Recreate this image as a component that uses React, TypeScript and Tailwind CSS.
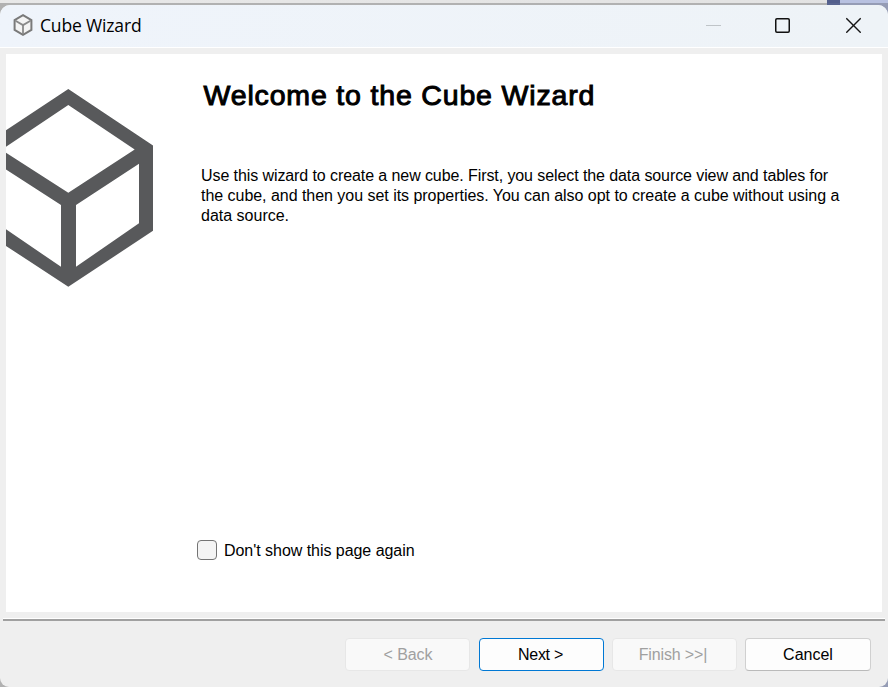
import type { ReactNode } from "react";

function CubeIcon() {
  return (
    <svg width="20" height="22" viewBox="0 0 20 22" fill="none" strokeLinejoin="miter">
      <path d="M10 1.2 L18.4 6.1 V15.9 L10 20.8 L1.6 15.9 V6.1 Z" fill="#f4f4f4" stroke="#7a7a7a" strokeWidth="2" />
      <path d="M2.5 6.8 L10 11.1 L17.5 6.8 M10 11.1 V20" stroke="#8a8a8a" strokeWidth="1.8" />
    </svg>
  );
}

function TitleBar() {
  return (
    <header className="flex h-[43px] shrink-0 items-center border-b border-white bg-gradient-to-r from-[#eff4fb] to-[#eef3f7] pl-[13px]">
      <div className="-mt-[2px] flex">
        <CubeIcon />
      </div>
      <h1 className="-mt-[2px] ml-[7px] flex-1 whitespace-nowrap font-['Open_Sans','Noto_Sans',sans-serif] text-[17.5px] leading-6 tracking-[-0.16px]">
        Cube Wizard
      </h1>
      <div className="-mt-[2px] flex items-center pr-[27px]">
        <svg className="mr-[54px]" width="15" height="16" viewBox="0 0 15 16">
          <path d="M0 8.5H15" stroke="#bfc4c8" />
        </svg>
        <svg className="mr-[56px]" width="15" height="16" viewBox="0 0 15 16" fill="none">
          <rect x="0.75" y="1.75" width="13.5" height="13.5" rx="1.2" stroke="#111" strokeWidth="1.5" />
        </svg>
        <svg width="15" height="16" viewBox="0 0 15 16">
          <path d="M0.3 1.3L14.7 15.7M14.7 1.3L0.3 15.7" stroke="#151515" strokeWidth="1.35" />
        </svg>
      </div>
    </header>
  );
}

function CubeArt() {
  return (
    <svg className="mt-[35px] shrink-0" width="147" height="198" viewBox="6 89 147 198">
      <path
        fill="#58595b"
        fillRule="evenodd"
        d="M68.3 89L153 145.5V230.8L68.3 286.8L-17 230.8V145.5Z M68.3 105L134.7 149.5L68.3 192.7L1.5 149.8Z M76 205L139 163.7V223.2L76 266.8Z M61 205L-3 163.7V223.2L61 266.8Z"
      />
    </svg>
  );
}

function WizardButton({ children, className }: { children: ReactNode; className: string }) {
  return (
    <button className={`h-[33px] rounded-[4px] border text-[16px] whitespace-pre ${className}`}>{children}</button>
  );
}

export default function App() {
  return (
    <div className="flex h-[687px] w-[888px] flex-col overflow-hidden bg-gradient-to-r from-[#e8e8e8] to-[#e2e2e2] font-['Liberation_Sans',Arial,sans-serif] text-black">
      <div className="flex h-[3px] shrink-0 justify-end">
        <div className="w-[13px] bg-[#535f8c]" />
        <div className="w-12 bg-[#b8c1e0]" />
      </div>
      <div className="flex flex-1 bg-[linear-gradient(to_right,#b1b1b1_827px,#596590_827px,#596590_840px,#959cb5_840px)]">
        <div className="mt-[2px] flex flex-1 flex-col overflow-hidden rounded-t-[10px] rounded-b-[9px] bg-[#efefef]">
          <TitleBar />
          <main className="mx-[6px] mt-[6px] flex h-[558px] shrink-0 bg-white">
            <CubeArt />
            <div className="flex flex-1 flex-col">
              <h2 className="mt-[25px] ml-[50.5px] text-[28.5px] leading-8 font-normal tracking-[0.83px] whitespace-nowrap [-webkit-text-stroke:1px_black]">
                Welcome to the Cube Wizard
              </h2>
              <div className="mt-[55px] ml-[48px] text-[16px] leading-5 whitespace-nowrap">
                <p className="tracking-[-0.088px]">Use this wizard to create a new cube. First, you select the data source view and tables for</p>
                <p className="tracking-[-0.033px]">the cube, and then you set its properties. You can also opt to create a cube without using a</p>
                <p>data source.</p>
              </div>
              <label className="mt-[314px] ml-[44px] flex items-center text-[16px] leading-5 tracking-[-0.04px] whitespace-nowrap">
                <span className="mr-[7px] h-5 w-5 rounded-[4px] border border-[#747474] bg-[#f4f4f4]" />
                <span className="pt-px -mb-px">Don't show this page again</span>
              </label>
            </div>
          </main>
          <div className="mx-[3px] mt-[6px] h-[3px] shrink-0 border-t border-white bg-[#a0a0a0]" />
          <footer className="flex justify-end gap-2 pt-[17px] pr-[17px]">
            <WizardButton className="mr-px w-[125px] border-[#e7e7e7] bg-[#f9f9f9] px-0 pl-px tracking-[-0.1px] text-[#a0a0a0]">{"< Back"}</WizardButton>
            <WizardButton className="w-[125px] border-[#0078d4] bg-[#fdfdfd] pr-[2px] tracking-[-0.3px]">{"Next >"}</WizardButton>
            <WizardButton className="w-[125px] border-[#e7e7e7] bg-[#f9f9f9] pr-[3px] tracking-[-0.15px] text-[#a0a0a0]">{"Finish >>|"}</WizardButton>
            <WizardButton className="w-[126px] border-[#d0d0d0] border-b-[#bababa] bg-[#fdfdfd]">Cancel</WizardButton>
          </footer>
        </div>
      </div>
    </div>
  );
}
